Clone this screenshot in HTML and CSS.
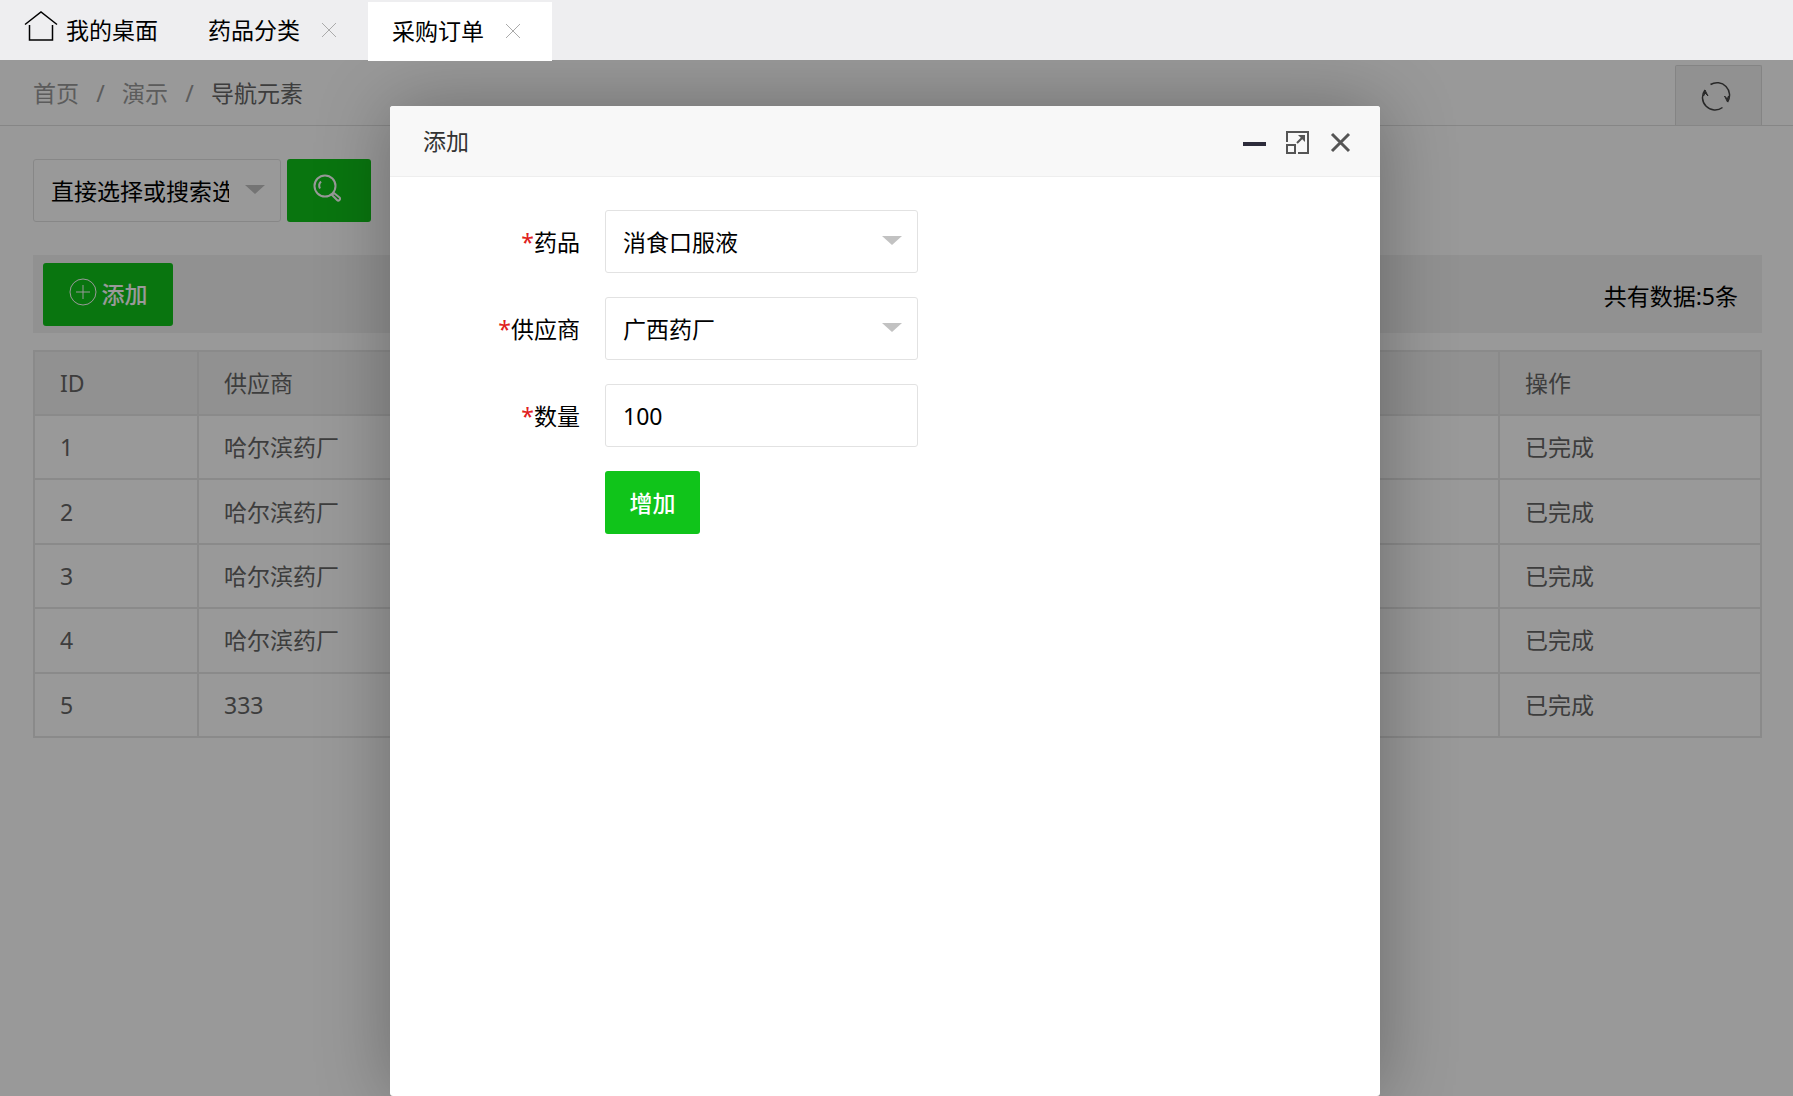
FILE: index.html
```html
<!DOCTYPE html>
<html lang="zh-CN">
<head>
<meta charset="utf-8">
<meta name="viewport" content="width=device-width, initial-scale=1">
<title>采购订单</title>
<link rel="stylesheet" href="styles.css">
</head>
<body>
<nav class="tabs">
  <a class="tab tab-home" href="#home">
    <svg class="icon-home" viewBox="0 0 34 30" aria-hidden="true"><path d="M1 13.500 17 1l16 12.500M5.500 14v15h23V14"/></svg>
    <span>我的桌面</span>
  </a>
  <div class="tab">
    <a href="#category">药品分类</a>
    <button class="tab-close" type="button" aria-label="关闭"><svg viewBox="0 0 16 16"><path d="M1 1l14 14M15 1 1 15"/></svg></button>
  </div>
  <div class="tab tab-active">
    <a href="#orders">采购订单</a>
    <button class="tab-close" type="button" aria-label="关闭"><svg viewBox="0 0 16 16"><path d="M1 1l14 14M15 1 1 15"/></svg></button>
  </div>
</nav>

<main class="frame">
  <header class="crumb-bar">
    <div class="crumbs">
      <a href="#home">首页</a><span>/</span><a href="#demo">演示</a><span>/</span><a class="current" href="#nav">导航元素</a>
    </div>
    <button class="refresh" type="button" aria-label="刷新">
      <svg viewBox="0 0 30 30" aria-hidden="true">
        <path d="M9.500 3.500A12.500 12.500 0 0 1 26.500 21M21.500 26.500A12.500 12.500 0 0 1 4 9"/>
        <path class="tip" d="M23.500 15l3 6 1-6-1 3zM2.500 15 4 9l3 6-3-3z"/>
      </svg>
    </button>
  </header>

  <section class="content">
    <form class="search">
      <span class="select-box search-select">
        <select aria-label="供应商筛选"><option>直接选择或搜索选择</option></select>
      </span>
      <button class="btn btn-search" type="button" aria-label="搜索">
        <svg viewBox="0 0 28 28" aria-hidden="true">
          <circle cx="12" cy="12" r="10.500"/><path d="M7 14.500a6 6 0 0 1 1-7"/>
          <path d="M19 21l2-2 5.500 4.500a1.500 1.500 0 0 1-2.500 2.500z"/>
        </svg>
      </button>
    </form>

    <div class="toolbar">
      <button class="btn btn-add" type="button">
        <svg viewBox="0 0 28 28" aria-hidden="true"><circle cx="14" cy="14" r="13"/><path d="M14 7v14M7 14h14"/></svg>
        <span>添加</span>
      </button>
      <span class="total">共有数据:5条</span>
    </div>

    <table class="orders">
      <colgroup><col class="col-id"><col class="col-supplier"><col><col class="col-action"></colgroup>
      <thead><tr><th>ID</th><th>供应商</th><th></th><th>操作</th></tr></thead>
      <tbody>
        <tr><td>1</td><td>哈尔滨药厂</td><td></td><td>已完成</td></tr>
        <tr><td>2</td><td>哈尔滨药厂</td><td></td><td>已完成</td></tr>
        <tr><td>3</td><td>哈尔滨药厂</td><td></td><td>已完成</td></tr>
        <tr><td>4</td><td>哈尔滨药厂</td><td></td><td>已完成</td></tr>
        <tr><td>5</td><td>333</td><td></td><td>已完成</td></tr>
      </tbody>
    </table>
  </section>

  <div class="shade">
    <div class="dialog" role="dialog" aria-labelledby="dialog-title">
      <header class="dialog-head">
        <h2 id="dialog-title">添加</h2>
        <div class="dialog-tools">
          <button type="button" aria-label="最小化"><svg viewBox="0 0 24 24"><path class="bar" d="M1 12h23v4H1z"/></svg></button>
          <button type="button" aria-label="最大化"><svg viewBox="0 0 24 24"><path d="M2 12V2h21v21H13M2 15h8v8H2zM12 13l7-7"/><path class="head" d="M13 5h7v7z"/></svg></button>
          <button type="button" aria-label="关闭"><svg viewBox="0 0 24 24"><path class="cross" d="M4 4l17 17M21 4 4 21"/></svg></button>
        </div>
      </header>
      <form class="fields">
        <label for="drug"><span class="req">*</span>药品</label>
        <span class="select-box"><select id="drug"><option>消食口服液</option></select></span>
        <label for="supplier"><span class="req">*</span>供应商</label>
        <span class="select-box"><select id="supplier"><option>广西药厂</option></select></span>
        <label for="amount"><span class="req">*</span>数量</label>
        <input id="amount" type="text" value="100">
        <button class="btn btn-submit" type="button">增加</button>
      </form>
    </div>
  </div>
</main>
</body>
</html>
```
FILE: styles.css
```css
* { box-sizing: border-box; }

body {
  margin: 0;
  min-height: 100vh;
  display: flex;
  flex-direction: column;
  background: #fff;
  color: #000;
  font: 23px/32px "Noto Sans", "Noto Sans CJK SC", sans-serif;
}

a { color: inherit; text-decoration: none; }
button, input, select { font: inherit; color: inherit; margin: 0; }
button { padding: 0; border: 0; background: none; cursor: pointer; }
svg { display: block; fill: none; stroke: currentColor; }

/* Tab strip */
.tabs {
  position: relative;
  z-index: 2;
  display: flex;
  height: 60px;
  padding-top: 2px;
  background: #eeeef0;
}
.tab {
  display: flex;
  align-items: center;
  gap: 21px;
  height: 58px;
  padding: 0 31px 2px 24px;
}
.tab-home { gap: 8px; padding-right: 26px; }
.tab-active { height: 59px; background: #fff; }
.icon-home { width: 34px; height: 30px; margin-bottom: 8px; stroke-width: 1.500; }
.tab-close { width: 16px; height: 16px; color: #aaa; }

/* Page shown under the tabs */
.frame {
  position: relative;
  flex: 1;
  overflow: hidden;
}
.crumb-bar {
  display: flex;
  justify-content: space-between;
  align-items: center;
  height: 66px;
  padding: 5px 31px 0 33px;
  border-bottom: 1px solid #e0e0e0;
}
.crumbs { display: flex; padding-bottom: 5px; color: #999; }
.crumbs span { width: 43px; text-align: center; }
.crumbs .current { color: #666; }
.refresh {
  display: grid;
  place-items: center;
  width: 87px;
  height: 60px;
  border: 1px solid #dcdcdc;
  border-bottom: 0;
  border-radius: 2px 2px 0 0;
  background: #f2f2f2;
  color: #444;
}
.refresh svg { width: 30px; height: 30px; margin-right: 6px; stroke-width: 1.500; }
.refresh .tip { fill: currentColor; stroke-width: 1; }

.content { padding: 33px 31px 33px 33px; }
.search { display: flex; gap: 6px; margin-bottom: 33px; }

.select-box { position: relative; display: block; }
.select-box::after {
  content: "";
  position: absolute;
  top: 26px;
  right: 16px;
  border: 10px solid transparent;
  border-top: 9px solid #c2c2c2;
  border-bottom: 0;
  pointer-events: none;
}
select, input {
  display: block;
  width: 100%;
  height: 63px;
  padding: 0 51px 0 17px;
  border: 1px solid #e2e2e2;
  border-radius: 3px;
  background: #fff;
  appearance: none;
}
.search-select { width: 248px; }

.btn {
  display: flex;
  align-items: center;
  justify-content: center;
  height: 63px;
  border-radius: 3px;
  background: #10c41a;
  color: #fff;
  font-weight: 500;
}
.btn-search { width: 84px; }
.btn-search svg { width: 28px; height: 28px; margin: 0 4px 5px 0; stroke-width: 2; }
.btn-add { width: 130px; gap: 5px; }
.btn-add svg { width: 28px; height: 28px; margin-bottom: 4px; }
.btn-submit { grid-column: 2; width: 95px; }

.toolbar {
  display: flex;
  justify-content: space-between;
  align-items: center;
  height: 78px;
  margin-bottom: 17px;
  padding: 0 24px 0 10px;
  background: #f2f2f2;
}
.total { padding-top: 4px; }

.orders {
  width: 100%;
  height: 388px;
  table-layout: fixed;
  border-collapse: collapse;
  color: #666;
}
.orders th, .orders td {
  height: 64px;
  padding: 0 25px;
  border: 2px solid #e6e6e6;
  font-weight: 400;
  text-align: left;
}
.orders th { background: #f2f2f2; }
.col-id { width: 164px; }
.col-supplier { width: 360px; }
.col-action { width: 262px; }

/* Dialog layer */
.shade {
  position: absolute;
  inset: 0;
  display: flex;
  justify-content: center;
  padding: 46px 23px 0 0;
  background: rgba(0, 0, 0, 0.4);
}
.dialog {
  width: 990px;
  max-width: 100%;
  border-radius: 3px;
  background: #fff;
  box-shadow: 1px 1px 75px rgba(0, 0, 0, 0.3);
}
.dialog-head {
  display: flex;
  justify-content: space-between;
  align-items: center;
  height: 71px;
  padding: 0 28px 0 33px;
  border-bottom: 1px solid #eee;
  border-radius: 3px 3px 0 0;
  background: #f8f8f8;
  color: #333;
}
.dialog-head h2 { margin: 0; font-size: 23px; line-height: 32px; font-weight: 400; }
.dialog-tools { display: flex; gap: 19px; padding-top: 2px; color: #555; }
.dialog-tools svg { width: 24px; height: 24px; stroke-width: 2; }
.dialog-tools .bar { fill: #2d2c3b; stroke: none; }
.dialog-tools .head { fill: currentColor; stroke: none; }
.dialog-tools .cross { stroke-width: 3; }

.fields {
  display: grid;
  grid-template-columns: 157px 313px;
  gap: 24px 25px;
  align-items: center;
  padding: 33px;
}
.fields label { text-align: right; }
.req { color: #e02020; }
```
